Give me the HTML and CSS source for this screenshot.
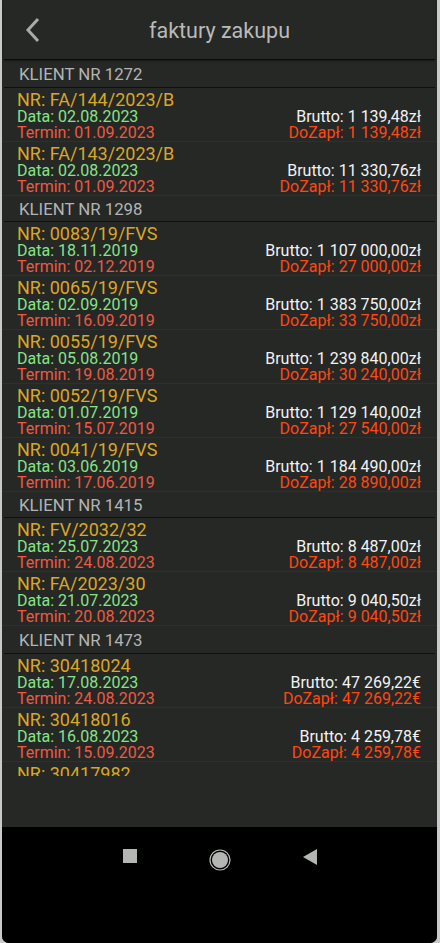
FILE: index.html
```html
<!DOCTYPE html>
<html lang="pl">

<head>
  <meta charset="UTF-8" />
  <meta name="viewport" content="width=device-width, initial-scale=1.0" />
  <title>faktury zakupu</title>
  <link rel="stylesheet" href="styles.css">
</head>

<body>
  <div class="screen">
    <div class="toolbar">
      <svg class="back" width="18" height="28" viewBox="0 0 18 28">
        <path d="M14 3 L4 14 L14 25" fill="none" stroke="#a9aaa9" stroke-width="3" />
      </svg>
      <span class="title">faktury zakupu</span>
    </div>

    <div class="list">
      <div class="client">KLIENT NR 1272</div>
      <div class="invoice">
        <div class="nr">NR: FA/144/2023/B</div>
        <div class="row"><span class="date">Data: 02.08.2023</span><span class="gross">Brutto: 1 139,48zł</span></div>
        <div class="row"><span class="due">Termin: 01.09.2023</span><span class="topay">DoZapł: 1 139,48zł</span></div>
      </div>
      <div class="invoice">
        <div class="nr">NR: FA/143/2023/B</div>
        <div class="row"><span class="date">Data: 02.08.2023</span><span class="gross">Brutto: 11 330,76zł</span></div>
        <div class="row"><span class="due">Termin: 01.09.2023</span><span class="topay">DoZapł: 11 330,76zł</span></div>
      </div>

      <div class="client">KLIENT NR 1298</div>
      <div class="invoice">
        <div class="nr">NR: 0083/19/FVS</div>
        <div class="row"><span class="date">Data: 18.11.2019</span><span class="gross">Brutto: 1 107 000,00zł</span></div>
        <div class="row"><span class="due">Termin: 02.12.2019</span><span class="topay">DoZapł: 27 000,00zł</span></div>
      </div>
      <div class="invoice">
        <div class="nr">NR: 0065/19/FVS</div>
        <div class="row"><span class="date">Data: 02.09.2019</span><span class="gross">Brutto: 1 383 750,00zł</span></div>
        <div class="row"><span class="due">Termin: 16.09.2019</span><span class="topay">DoZapł: 33 750,00zł</span></div>
      </div>
      <div class="invoice">
        <div class="nr">NR: 0055/19/FVS</div>
        <div class="row"><span class="date">Data: 05.08.2019</span><span class="gross">Brutto: 1 239 840,00zł</span></div>
        <div class="row"><span class="due">Termin: 19.08.2019</span><span class="topay">DoZapł: 30 240,00zł</span></div>
      </div>
      <div class="invoice">
        <div class="nr">NR: 0052/19/FVS</div>
        <div class="row"><span class="date">Data: 01.07.2019</span><span class="gross">Brutto: 1 129 140,00zł</span></div>
        <div class="row"><span class="due">Termin: 15.07.2019</span><span class="topay">DoZapł: 27 540,00zł</span></div>
      </div>
      <div class="invoice">
        <div class="nr">NR: 0041/19/FVS</div>
        <div class="row"><span class="date">Data: 03.06.2019</span><span class="gross">Brutto: 1 184 490,00zł</span></div>
        <div class="row"><span class="due">Termin: 17.06.2019</span><span class="topay">DoZapł: 28 890,00zł</span></div>
      </div>

      <div class="client">KLIENT NR 1415</div>
      <div class="invoice">
        <div class="nr">NR: FV/2032/32</div>
        <div class="row"><span class="date">Data: 25.07.2023</span><span class="gross">Brutto: 8 487,00zł</span></div>
        <div class="row"><span class="due">Termin: 24.08.2023</span><span class="topay">DoZapł: 8 487,00zł</span></div>
      </div>
      <div class="invoice">
        <div class="nr">NR: FA/2023/30</div>
        <div class="row"><span class="date">Data: 21.07.2023</span><span class="gross">Brutto: 9 040,50zł</span></div>
        <div class="row"><span class="due">Termin: 20.08.2023</span><span class="topay">DoZapł: 9 040,50zł</span></div>
      </div>

      <div class="client tall">KLIENT NR 1473</div>
      <div class="invoice">
        <div class="nr">NR: 30418024</div>
        <div class="row"><span class="date">Data: 17.08.2023</span><span class="gross">Brutto: 47 269,22€</span></div>
        <div class="row"><span class="due">Termin: 24.08.2023</span><span class="topay">DoZapł: 47 269,22€</span></div>
      </div>
      <div class="invoice">
        <div class="nr">NR: 30418016</div>
        <div class="row"><span class="date">Data: 16.08.2023</span><span class="gross">Brutto: 4 259,78€</span></div>
        <div class="row"><span class="due">Termin: 15.09.2023</span><span class="topay">DoZapł: 4 259,78€</span></div>
      </div>
      <div class="invoice">
        <div class="nr">NR: 30417982</div>
      </div>
    </div>

    <div class="spacer"></div>

    <div class="navbar">
      <svg width="14" height="14" viewBox="0 0 14 14"><rect width="14" height="14" fill="#b4b6b4" /></svg>
      <svg width="22" height="22" viewBox="0 0 22 22">
        <circle cx="11" cy="11" r="10" fill="none" stroke="#b4b6b4" stroke-width="1.2" />
        <circle cx="11" cy="11" r="8" fill="#b4b6b4" />
      </svg>
      <svg width="14" height="16" viewBox="0 0 14 16"><path d="M0 8 L14 0 L14 16 Z" fill="#b4b6b4" /></svg>
    </div>
  </div>
</body>

</html>
```

FILE: styles.css
```css
body {
  margin: 0;
  background-color: #c9cac9;
  font-family: Roboto, "Noto Sans", sans-serif;
}

.screen {
  margin: 0 3px 0 2px;
  height: 943px;
  background-color: #262826;
  display: flex;
  flex-direction: column;
  border-radius: 0 0 7px 7px;
  overflow: hidden;
}

.toolbar {
  height: 59px;
  display: flex;
  align-items: center;
  justify-content: center;
  position: relative;
  border-bottom: 1px solid #0a0a0a;
  margin: 0 2px;
  box-shadow: 0 1px 2px rgba(0, 0, 0, 0.4);
}

.back {
  position: absolute;
  left: 20px;
  top: 16px;
}

.title {
  color: #b9bab9;
  font-size: 21.5px;
  padding-top: 2px;
}

.list {
  height: 716px;
  overflow: hidden;
}

.client {
  box-sizing: border-box;
  height: 26px;
  line-height: 27px;
  padding-left: 15px;
  font-size: 16.8px;
  color: #b3b4b3;
  border-bottom: 1px solid #0e0f0e;
  margin: 0 2px;
}

.list>.client:first-child {
  height: 28px;
  line-height: 28px;
}

.client.tall {
  height: 28px;
  line-height: 29px;
}

.invoice {
  box-sizing: border-box;
  height: 54px;
  padding: 2px 16px 0 15px;
  border-bottom: 1px solid #2e302e;
}

.nr {
  font-size: 18px;
  line-height: 19px;
  color: #d9a626;
}

.row {
  display: flex;
  justify-content: space-between;
  font-size: 16px;
  line-height: 16px;
}

.date {
  color: #86e386;
}

.due {
  color: #ec5a43;
}

.gross {
  color: #f2f2f2;
}

.topay {
  color: #ff4714;
}

.spacer {
  flex: 1;
}

.navbar {
  height: 116px;
  background-color: #000;
  display: flex;
  justify-content: center;
  align-items: flex-start;
  gap: 72px;
  padding-top: 21px;
  box-sizing: border-box;
}

.navbar svg {
  margin-top: 1px;
}
```
